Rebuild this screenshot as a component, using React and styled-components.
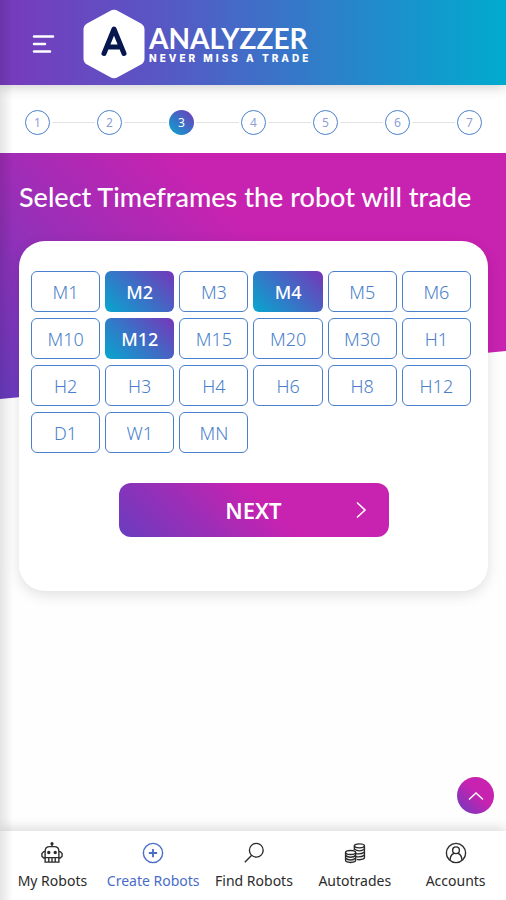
import React, { useState } from 'react'
import styled, { createGlobalStyle, css } from 'styled-components'

// Tokens
const color = {
  BLUE: '#4a7fcb',
  BLUE_SOFT: '#8c9fd8',
  BLUE_ACTIVE: '#4a6cc8',
  NAVY: '#06164f',
  TEXT: '#2b2b2b',
  LINE: '#e4e4e7',
  WHITE: '#ffffff',
}

const gradient = {
  HEADER: 'linear-gradient(90deg, #783abc 0%, #5a55c4 30%, #00abcf 100%)',
  PINK: 'linear-gradient(45deg, #693cbf 0%, #c822b0 56%)',
  BLUE: 'linear-gradient(45deg, #06a7ce 0%, #3c6fc6 50%, #7636b9 100%)',
}

const fontFamily = {
  BODY: "'Noto Sans', 'Open Sans', sans-serif",
  DISPLAY: "'Lato', sans-serif",
  TAGLINE: "'Inter', sans-serif",
}

const STEPS = [1, 2, 3, 4, 5, 6, 7]
const CURRENT_STEP = 3

const TIMEFRAMES = [
  'M1', 'M2', 'M3', 'M4', 'M5', 'M6',
  'M10', 'M12', 'M15', 'M20', 'M30', 'H1',
  'H2', 'H3', 'H4', 'H6', 'H8', 'H12',
  'D1', 'W1', 'MN',
]

const RobotIcon = () => (
  <NavIcon viewBox="0 0 24 24">
    <path d="M12 5V1.500M4.500 10Q4.500 5 9.500 5h5Q19.500 5 19.500 10v7h-15z" />
    <path d="M4.500 10.500H3l-2 2v3l2 2h1.500M19.500 10.500H21l2 2v3l-2 2h-1.500" />
    <path d="M4.500 17v5h15v-5M8.500 17.500V22M12 17.500V22M15.500 17.500V22" />
    <circle cx="12" cy="1.800" r="1" fill="currentColor" />
    <circle cx="8.500" cy="11.500" r="1.100" fill="currentColor" />
    <circle cx="15.500" cy="11.500" r="1.100" fill="currentColor" />
  </NavIcon>
)

const PlusIcon = () => (
  <NavIcon viewBox="0 0 24 24">
    <circle cx="12" cy="12" r="10.500" />
    <path d="M12 7.500v9M7.500 12h9" strokeWidth="2" />
  </NavIcon>
)

const SearchIcon = () => (
  <NavIcon viewBox="0 0 24 24">
    <circle cx="14.500" cy="9" r="7.500" />
    <path d="M9.500 14.500l-7.500 7.500" />
  </NavIcon>
)

const CoinsIcon = () => (
  <NavIcon viewBox="0 0 24 24">
    <ellipse cx="16.800" cy="4.200" rx="5.500" ry="2.200" />
    <path d="M11.300 4.200v4.500M22.300 4.200v12.800c0 1.300-2.500 2.300-5.500 2.300q-1.600 0-2.800-.4" />
    <path d="M11.300 7.500q2 2.200 5.500 2.200t5.500-2.200M13 12.700q5.500 1 9.300-1.700M13 16q5.500 1 9.300-1.700" />
    <ellipse cx="7.200" cy="11.500" rx="5.500" ry="2.200" />
    <path d="M1.700 11.500v8.500c0 1.300 2.500 2.300 5.500 2.300s5.500-1 5.500-2.300v-8.500M1.700 14.500q2 2.200 5.500 2.200t5.500-2.200M1.700 17.500q2 2.200 5.500 2.200t5.500-2.200" />
  </NavIcon>
)

const AccountIcon = () => (
  <NavIcon viewBox="0 0 24 24">
    <circle cx="12" cy="12" r="10.500" />
    <circle cx="12" cy="9" r="3.700" />
    <path d="M5.500 19.500q.5-6 4.500-7.200M18.500 19.500q-.5-6-4.500-7.200" />
  </NavIcon>
)

const NAV_ITEMS = [
  { label: 'My Robots', Icon: RobotIcon },
  { label: 'Create Robots', Icon: PlusIcon, active: true },
  { label: 'Find Robots', Icon: SearchIcon },
  { label: 'Autotrades', Icon: CoinsIcon },
  { label: 'Accounts', Icon: AccountIcon },
]

const App = () => {
  const [selected, setSelected] = useState(['M2', 'M4', 'M12'])

  const toggle = frame =>
    setSelected(
      selected.includes(frame)
        ? selected.filter(item => item !== frame)
        : [...selected, frame]
    )

  return (
    <Page>
      <GlobalStyle />
      <Header>
        <MenuButton type="button" aria-label="Menu">
          <svg width="24" height="20" viewBox="0 0 24 20">
            <path d="M2 2.500h19M2 10h11M2 17.500h16" />
          </svg>
        </MenuButton>
        <Brand href="#home">
          <Badge>
            <svg width="62" height="70" viewBox="0 0 62 70">
              <path
                d="M27 2q4-2.500 8 0l23 12.500q3.500 2 3.500 6v29q0 4-3.500 6L35 68q-4 2.500-8 0L4 55.500q-3.500-2-3.500-6v-29q0-4 3.500-6z"
                fill="#fff"
              />
              <path
                d="M21 44.500L31 20L41 44.500M25 38h12"
                fill="none"
                stroke={color.NAVY}
                strokeWidth="5"
                strokeLinecap="round"
                strokeLinejoin="round"
              />
            </svg>
          </Badge>
          <BrandText>
            <BrandName>ANALYZZER</BrandName>
            <Tagline>NEVER MISS A TRADE</Tagline>
          </BrandText>
        </Brand>
      </Header>

      <Steps>
        {STEPS.map(step => (
          <Step key={step}>
            <StepNumber $active={step === CURRENT_STEP}>{step}</StepNumber>
          </Step>
        ))}
      </Steps>

      <Main>
        <Title>Select Timeframes the robot will trade</Title>
        <Card>
          <Timeframes>
            {TIMEFRAMES.map(frame => (
              <Timeframe
                key={frame}
                type="button"
                aria-pressed={selected.includes(frame)}
                $active={selected.includes(frame)}
                onClick={() => toggle(frame)}
              >
                {frame}
              </Timeframe>
            ))}
          </Timeframes>
          <NextButton type="button">
            <span>NEXT</span>
            <svg width="12" height="18" viewBox="0 0 12 18">
              <path d="M2 1.500L10 9L2 16.500" />
            </svg>
          </NextButton>
        </Card>
      </Main>

      <ScrollTop type="button" aria-label="Back to top">
        <svg width="18" height="12" viewBox="0 0 18 12">
          <path d="M2 9.500L9 3l7 6.500" />
        </svg>
      </ScrollTop>

      <BottomNav>
        {NAV_ITEMS.map(({ label, Icon, active }) => (
          <NavLink key={label} href={`#${label}`} $active={active}>
            <Icon />
            {label}
          </NavLink>
        ))}
      </BottomNav>
    </Page>
  )
}

const GlobalStyle = createGlobalStyle`
  * {
    box-sizing: border-box;
  }

  body {
    margin: 0;
    background: #fefefe;
    font-family: ${fontFamily.BODY};
  }

  button {
    font-family: inherit;
    border: none;
    padding: 0;
    cursor: pointer;
  }

  svg {
    display: block;
  }
`

const Page = styled.div`
  min-height: 100vh;
  display: flex;
  flex-direction: column;

  /* soft shade along the left edge */
  &::after {
    content: '';
    position: fixed;
    top: 0;
    bottom: 0;
    left: 0;
    width: 13px;
    background: linear-gradient(90deg, rgba(0, 0, 0, 0.1), rgba(0, 0, 0, 0));
    pointer-events: none;
    z-index: 3;
  }
`

const Header = styled.header`
  display: flex;
  align-items: center;
  gap: 27px;
  height: 85px;
  padding: 3px 32px 0;
  background: ${gradient.HEADER};
  box-shadow: 0 2px 12px rgba(0, 0, 0, 0.2);
  z-index: 1;
`

const MenuButton = styled.button`
  background: none;

  path {
    stroke: ${color.WHITE};
    stroke-width: 2.5;
    stroke-linecap: round;
  }
`

const Brand = styled.a`
  display: flex;
  align-items: center;
  gap: 4px;
  color: ${color.WHITE};
  text-decoration: none;
`

const Badge = styled.span`
  flex: none;
`

const BrandText = styled.span`
  display: flex;
  flex-direction: column;
`

const BrandName = styled.strong`
  font-family: ${fontFamily.DISPLAY};
  font-size: 28px;
  line-height: 28px;
  font-weight: 700;
`

const Tagline = styled.span`
  font-family: ${fontFamily.TAGLINE};
  font-size: 10px;
  line-height: 12px;
  font-weight: 800;
  letter-spacing: 3px;
  white-space: nowrap;
`

const Steps = styled.ol`
  display: flex;
  margin: 0;
  padding: 25px 24px 18px 25px;
  list-style: none;
  background: ${color.WHITE};
`

const Step = styled.li`
  display: flex;
  align-items: center;

  & + & {
    flex: 1;
  }

  & + &::before {
    content: '';
    flex: 1;
    height: 1px;
    margin: 0 2px;
    background: ${color.LINE};
  }
`

const StepNumber = styled.span`
  display: flex;
  align-items: center;
  justify-content: center;
  width: 25px;
  height: 25px;
  border: 1px solid ${color.BLUE};
  border-radius: 50%;
  color: ${color.BLUE_SOFT};
  font-size: 12px;

  ${props => props.$active && css`
    border: none;
    background: ${gradient.BLUE};
    color: ${color.WHITE};
  `}
`

const Main = styled.main`
  position: relative;
  flex: 1;
  padding: 0 18px 120px 19px;

  /* slanted backdrop */
  &::before {
    content: '';
    position: absolute;
    top: 0;
    left: 0;
    right: 0;
    height: 246px;
    background: ${gradient.PINK};
    clip-path: polygon(0 0, 100% 0, 100% 198px, 0 100%);
  }
`

const Title = styled.h1`
  position: relative;
  margin: 0;
  padding: 28px 0;
  color: ${color.WHITE};
  font-family: ${fontFamily.DISPLAY};
  font-size: 27px;
  line-height: 32px;
  font-weight: 500;
`

const Card = styled.section`
  position: relative;
  padding: 30px 12px 54px;
  border-radius: 26px;
  background: ${color.WHITE};
  box-shadow: 0 4px 14px rgba(0, 0, 0, 0.12);
`

const Timeframes = styled.div`
  display: grid;
  grid-template-columns: repeat(6, 1fr);
  gap: 6px 5px;
  margin-right: 5px;
`

const Timeframe = styled.button`
  height: 41px;
  border: 1px solid ${color.BLUE};
  border-radius: 6px;
  background: ${color.WHITE};
  color: ${color.BLUE};
  font-size: 18px;
  font-weight: 300;

  ${props => props.$active && css`
    border: none;
    background: ${gradient.BLUE};
    color: ${color.WHITE};
    font-weight: 500;
  `}
`

const NextButton = styled.button`
  display: grid;
  grid-template-columns: 1fr auto 1fr;
  align-items: center;
  width: 270px;
  max-width: 100%;
  height: 54px;
  margin: 30px auto 0;
  padding: 0 22px;
  border-radius: 12px;
  background: ${gradient.PINK};
  color: ${color.WHITE};
  font-size: 22px;
  font-weight: 600;

  span {
    grid-column: 2;
  }

  svg {
    justify-self: end;
  }

  path {
    fill: none;
    stroke: ${color.WHITE};
    stroke-width: 1.6;
  }
`

const ScrollTop = styled.button`
  position: fixed;
  right: 12px;
  bottom: 86px;
  display: flex;
  align-items: center;
  justify-content: center;
  width: 37px;
  height: 37px;
  border-radius: 50%;
  background: ${gradient.PINK};
  z-index: 2;

  path {
    fill: none;
    stroke: ${color.WHITE};
    stroke-width: 1.5;
  }
`

const BottomNav = styled.nav`
  position: sticky;
  bottom: 0;
  display: grid;
  grid-template-columns: repeat(5, 1fr);
  height: 69px;
  padding-left: 2px;
  background: ${color.WHITE};
  box-shadow: 0 -2px 12px rgba(0, 0, 0, 0.16);
  z-index: 1;
`

const NavLink = styled.a`
  display: flex;
  flex-direction: column;
  align-items: center;
  gap: 8px;
  padding-top: 11px;
  color: ${props => (props.$active ? color.BLUE_ACTIVE : color.TEXT)};
  font-size: 14px;
  line-height: 18px;
  text-decoration: none;
  white-space: nowrap;
`

const NavIcon = styled.svg`
  width: 22px;
  height: 22px;
  fill: none;
  stroke: currentColor;
  stroke-width: 1.5;
`

export default App
